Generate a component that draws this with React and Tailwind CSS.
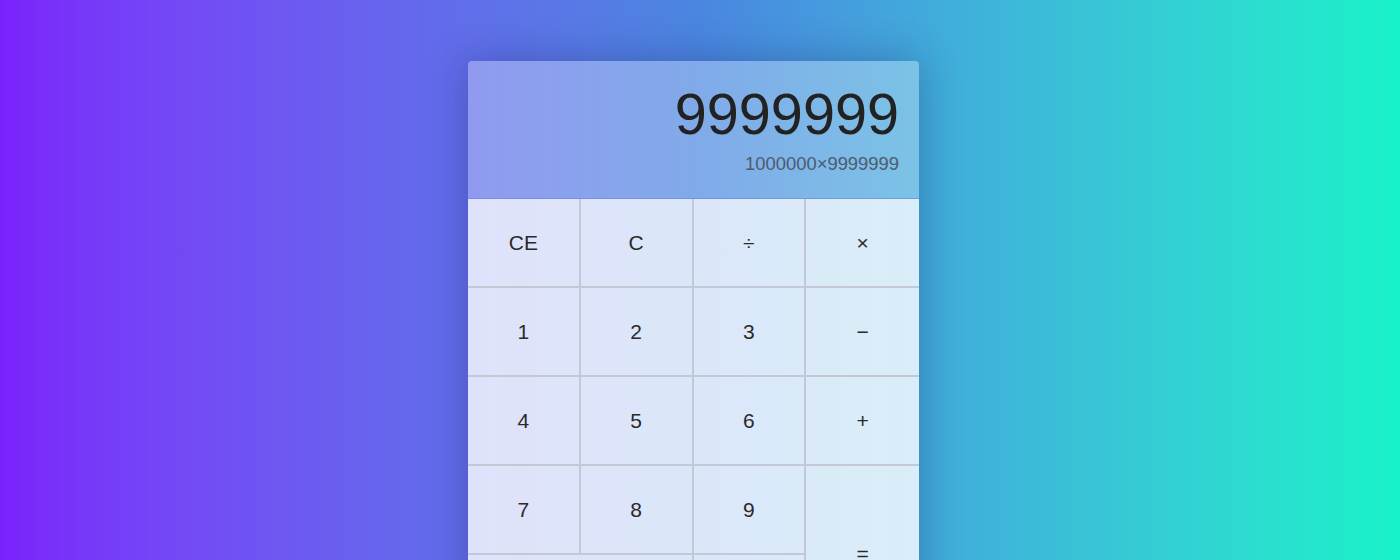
import React from 'react';

const keys = [
	{ label: 'CE' },
	{ label: 'C' },
	{ label: '÷' },
	{ label: '×', edge: true },
	{ label: '1' },
	{ label: '2' },
	{ label: '3' },
	{ label: '−', edge: true },
	{ label: '4' },
	{ label: '5' },
	{ label: '6' },
	{ label: '+', edge: true },
	{ label: '7' },
	{ label: '8' },
	{ label: '9' },
	{ label: '=', tall: true, edge: true },
	{ label: '0', wide: true },
	{ label: '.' }
];

function Key({ label, wide, tall, edge }) {
	return (
		<button
			className={
				'flex items-center justify-center border-b-2 border-[#c2c9d5] bg-white/80 text-[21px] text-[#2a2a2a] ' +
				(edge ? 'border-r-0 ' : 'border-r-2 ') +
				(wide ? 'col-span-2 ' : '') +
				(tall ? 'row-span-2' : '')
			}
		>
			{label}
		</button>
	);
}

export default function App() {
	return (
		<div
			className="flex h-[560px] w-full justify-center overflow-hidden bg-gradient-to-r from-[#7b21fc] via-[#4a86e0] to-[#17f2c8] pr-[13px] pt-[61px]"
			style={{ fontFamily: '"Liberation Sans", Arial, sans-serif' }}
		>
			<div className="h-[620px] w-[451px] shrink-0 overflow-hidden rounded-[4px] shadow-[0_0_40px_rgba(20,20,80,0.3)]">
				<div className="flex flex-col items-end border-b border-[#6f86d8]/60 bg-white/30 pb-[25px] pr-[20px] pt-[25px]">
					<div className="text-[57.6px] leading-none text-[#222]">9999999</div>
					<div className="mt-[11px] text-[18.4px] leading-none text-[#4f5b6e]">1000000×9999999</div>
				</div>
				<div className="grid grid-cols-4 auto-rows-[89px]">
					{keys.map((k) => (
						<Key key={k.label} {...k} />
					))}
				</div>
			</div>
		</div>
	);
}
